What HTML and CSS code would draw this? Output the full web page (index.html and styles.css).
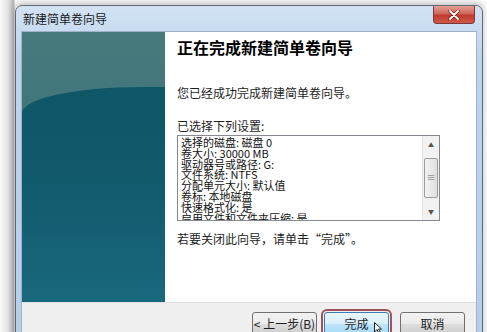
FILE: index.html
```html
<!DOCTYPE html>
<html lang="zh-CN">
<head>
  <meta charset="UTF-8">
  <title>新建简单卷向导</title>
  <link rel="stylesheet" href="styles.css">
</head>
<body>

  <!-- 向导窗口 -->
  <div class="window">
    <div class="titlebar">
      <span class="title">新建简单卷向导</span>
      <button class="close-btn">
        <svg width="12" height="10" viewBox="0 0 12 10">
          <path d="M2 1 L10 9 M10 1 L2 9" stroke="#6b1a1a" stroke-width="3.2" stroke-linecap="round"/>
          <path d="M2 1 L10 9 M10 1 L2 9" stroke="#ffffff" stroke-width="1.8" stroke-linecap="round"/>
        </svg>
      </button>
    </div>

    <div class="client">
      <div class="main">
        <div class="side"></div>
        <div class="content">
          <h1 class="heading">正在完成新建简单卷向导</h1>
          <p class="text done-text">您已经成功完成新建简单卷向导。</p>
          <p class="text">已选择下列设置:</p>
          <div class="listbox">
            <div class="list-lines">
              <div>选择的磁盘: 磁盘 0</div>
              <div>卷大小: 30000 MB</div>
              <div>驱动器号或路径: G:</div>
              <div>文件系统: NTFS</div>
              <div>分配单元大小: 默认值</div>
              <div>卷标: 本地磁盘</div>
              <div>快速格式化: 是</div>
              <div>启用文件和文件夹压缩: 是</div>
            </div>
            <div class="scrollbar">
              <div class="sb-arrow">▲</div>
              <div class="sb-track"><div class="sb-thumb">≡</div></div>
              <div class="sb-arrow">▼</div>
            </div>
          </div>
          <p class="text close-text">若要关闭此向导，请单击“完成”。</p>
        </div>
      </div>

      <div class="footer">
        <button class="btn">&lt; 上一步(B)</button>
        <button class="btn btn-default">完成
          <svg class="cursor" width="8" height="12" viewBox="0 0 8 12">
            <path d="M0.5 0.5 L0.5 10 L3 7.5 L5 11.5 L6.5 10.8 L4.6 7 L7.5 7 Z" fill="#fff" stroke="#222" stroke-width="1"/>
          </svg>
        </button>
        <button class="btn btn-cancel">取消</button>
      </div>
    </div>
  </div>

</body>
</html>
```

FILE: styles.css
```css
body {
  margin: 0;
  height: 332px;
  overflow: hidden;
  background: linear-gradient(to right, #fafafa 0px, #e2e2e2 8px, #b4b4b4 14px, #ffffff 15px);
  font-family: "Noto Sans CJK SC", "Microsoft YaHei", sans-serif;
  font-size: 12px;
  color: #1e1e1e;
}
.window {
  margin: 5px 0 0 15px;
  width: 468px;
  height: 360px;
  box-sizing: border-box;
  padding: 0 5px;
  border: 1px solid #5f6a77;
  border-radius: 7px 7px 0 0;
  background: linear-gradient(to bottom, #d3e3f4 0%, #bdd4ed 14%, #b5cee9 100%);
  box-shadow: 0 -2px 6px 1px rgba(0, 0, 0, 0.22);
}
.titlebar {
  height: 25px;
  display: flex;
  justify-content: space-between;
  align-items: flex-start;
}
.title {
  padding: 4px 0 0 2px;
  font-size: 12px;
  color: #1a1a1a;
}
.close-btn {
  width: 42px;
  height: 18px;
  margin-right: 2px;
  border: 1px solid #7a3a3a;
  border-top: none;
  border-radius: 0 0 4px 4px;
  background: linear-gradient(to bottom, #e5a195 0%, #d0665a 45%, #bf3b2e 55%, #d0584a 100%);
  display: flex;
  align-items: center;
  justify-content: center;
  padding: 0;
}
.client {
  background: #f0f0f0;
  border: 1px solid #9fb2c7;
  height: 400px;
}
.main {
  display: flex;
  height: 270px;
  background: #ffffff;
}
.side {
  width: 143px;
  position: relative;
  overflow: hidden;
  background: linear-gradient(to bottom, #477a7d 0%, #306b73 100%);
}
.side::before {
  content: "";
  position: absolute;
  left: 0;
  top: 55px;
  right: -30px;
  bottom: 0;
  border-top-left-radius: 120px 26px;
  background: linear-gradient(to bottom, #0f5767 0%, #11596b 40%, #19687e 100%);
}
.content {
  flex: 1;
  padding: 5px 0 0 12px;
}
.heading {
  margin: 0;
  font-size: 16px;
  line-height: 20px;
  font-weight: bold;
  color: #000;
}
.text {
  margin: 0;
  line-height: 16px;
}
.done-text {
  margin-top: 28px;
  margin-bottom: 17px;
}
.listbox {
  margin-top: 1px;
  width: 263px;
  height: 86px;
  box-sizing: border-box;
  border: 1px solid #858a93;
  display: flex;
  overflow: hidden;
}
.list-lines {
  flex: 1;
  padding: 1px 0 0 3px;
  font-size: 11px;
  line-height: 10.8px;
  color: #111;
}
.scrollbar {
  width: 16px;
  display: flex;
  flex-direction: column;
  background: #f2f2f2;
  border-left: 1px solid #e6e6e6;
}
.sb-arrow {
  height: 17px;
  font-size: 6px;
  line-height: 17px;
  text-align: center;
  color: #555;
}
.sb-track {
  flex: 1;
  padding: 5px 1px 0;
}
.sb-thumb {
  height: 38px;
  border: 1px solid #9c9c9c;
  border-radius: 2px;
  background: linear-gradient(to right, #f4f4f4, #dedede);
  font-size: 9px;
  line-height: 38px;
  text-align: center;
  color: #666;
}
.close-text {
  margin-top: 10px;
}
.footer {
  height: 100px;
  border-top: 1px solid #dfdfdf;
  display: flex;
  justify-content: flex-end;
  align-items: flex-start;
  padding: 9px 11px 0 0;
}
.btn {
  width: 65px;
  height: 23px;
  margin-left: 7px;
  padding: 0;
  font-family: "Noto Sans CJK SC", "Microsoft YaHei", sans-serif;
  font-size: 12px;
  color: #1e1e1e;
  border: 1px solid #707070;
  border-radius: 3px;
  background: linear-gradient(to bottom, #f2f2f2 0%, #ebebeb 50%, #dddddd 51%, #cfcfcf 100%);
}
.btn-default {
  position: relative;
  border-color: #3c7fb1;
  background: linear-gradient(to bottom, #eaf6fd 0%, #d9f0fc 50%, #bee6fd 51%, #a7d9f5 100%);
  outline: 2px solid #a0525f;
  outline-offset: 1px;
}
.cursor {
  position: absolute;
  left: 49px;
  top: 9px;
}
.btn-cancel {
  margin-left: 11px;
}
```
